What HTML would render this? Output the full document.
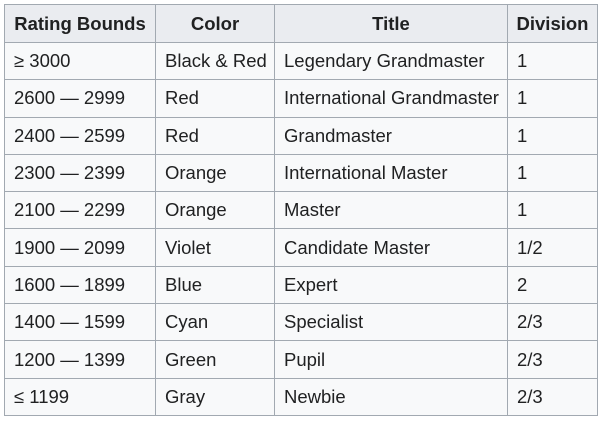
<!DOCTYPE html>
<html><head><meta charset="utf-8"><style>
html,body{margin:0;padding:0;background:#fff;width:602px;height:422px;overflow:hidden}
table{position:absolute;left:4px;top:4px;border-collapse:collapse;table-layout:fixed;width:594px;font-family:"Liberation Sans",sans-serif;font-size:18.5px;color:#202122;background:#f8f9fa}
td,th{border:1px solid #a2a9b1;padding:0 0 0 9px;height:36.3px;white-space:nowrap;overflow:hidden;text-align:left}
th{background:#eaecf0;font-weight:bold;text-align:center;padding:0;height:37px}
</style></head><body>
<table>
<colgroup><col style="width:151px"><col style="width:119px"><col style="width:233px"><col style="width:90px"></colgroup>
<tr><th>Rating Bounds</th><th>Color</th><th>Title</th><th>Division</th></tr>
<tr><td>≥ 3000</td><td>Black &amp; Red</td><td>Legendary Grandmaster</td><td>1</td></tr>
<tr><td>2600 — 2999</td><td>Red</td><td>International Grandmaster</td><td>1</td></tr>
<tr><td>2400 — 2599</td><td>Red</td><td>Grandmaster</td><td>1</td></tr>
<tr><td>2300 — 2399</td><td>Orange</td><td>International Master</td><td>1</td></tr>
<tr><td>2100 — 2299</td><td>Orange</td><td>Master</td><td>1</td></tr>
<tr><td>1900 — 2099</td><td>Violet</td><td>Candidate Master</td><td>1/2</td></tr>
<tr><td>1600 — 1899</td><td>Blue</td><td>Expert</td><td>2</td></tr>
<tr><td>1400 — 1599</td><td>Cyan</td><td>Specialist</td><td>2/3</td></tr>
<tr><td>1200 — 1399</td><td>Green</td><td>Pupil</td><td>2/3</td></tr>
<tr><td>≤ 1199</td><td>Gray</td><td>Newbie</td><td>2/3</td></tr>
</table>
</body></html>
